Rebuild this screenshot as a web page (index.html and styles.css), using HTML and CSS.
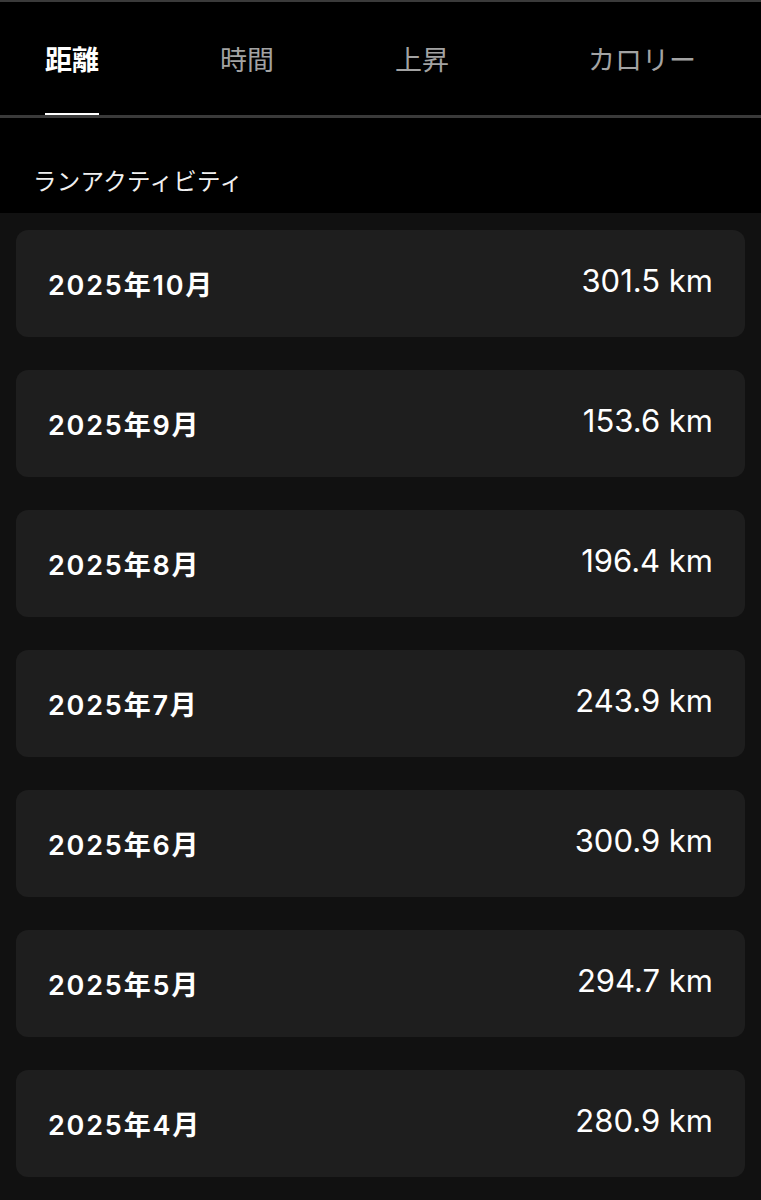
FILE: index.html
```html
<!DOCTYPE html>
<html lang="ja">
<head>
    <meta charset="UTF-8">
    <meta name="viewport" content="width=device-width, initial-scale=1.0">
    <title>ランアクティビティ</title>
    <link rel="stylesheet" href="styles.css">
</head>
<body>
    <header class="tabs">
        <nav class="tab-list">
            <a class="tab active" href="#">距離</a>
            <a class="tab" href="#">時間</a>
            <a class="tab" href="#">上昇</a>
            <a class="tab tab-last" href="#">カロリー</a>
        </nav>
    </header>

    <div class="section-title">ランアクティビティ</div>

    <main class="month-list">
        <div class="month-card">
            <span class="month">2025年10月</span>
            <span class="value">301.5 km</span>
        </div>
        <div class="month-card">
            <span class="month">2025年9月</span>
            <span class="value">153.6 km</span>
        </div>
        <div class="month-card">
            <span class="month">2025年8月</span>
            <span class="value">196.4 km</span>
        </div>
        <div class="month-card">
            <span class="month">2025年7月</span>
            <span class="value">243.9 km</span>
        </div>
        <div class="month-card">
            <span class="month">2025年6月</span>
            <span class="value">300.9 km</span>
        </div>
        <div class="month-card">
            <span class="month">2025年5月</span>
            <span class="value">294.7 km</span>
        </div>
        <div class="month-card">
            <span class="month">2025年4月</span>
            <span class="value">280.9 km</span>
        </div>
    </main>
</body>
</html>
```

FILE: styles.css
```css
body {
    font-family: Inter, "Noto Sans CJK JP", sans-serif;
    margin: 0;
    padding: 0;
    background-color: #111111;
    color: #ffffff;
}
.tabs {
    background-color: #000000;
    border-top: 2px solid #3a3a3a;
    border-bottom: 3px solid #3a3a3a;
}
.tab-list {
    display: flex;
    padding-left: 45px;
    gap: 121px;
    height: 113px;
}
.tab {
    font-family: "Noto Sans CJK JP", sans-serif;
    font-size: 27px;
    color: #a3a3a3;
    text-decoration: none;
    padding-top: 37px;
    line-height: 40px;
    box-sizing: border-box;
    height: 113px;
    border-bottom: 2px solid transparent;
}
.tab.active {
    color: #ffffff;
    font-weight: bold;
    border-bottom-color: #ffffff;
}
.tab-last {
    margin-left: 18px;
}
.section-title {
    background-color: #000000;
    font-family: "Noto Sans CJK JP", sans-serif;
    font-size: 23.5px;
    letter-spacing: 0.3px;
    color: #f0f0f0;
    padding: 47px 33px 0;
    height: 48px;
    line-height: 30px;
}
.month-list {
    padding: 17px 16px 20px;
    display: flex;
    flex-direction: column;
    gap: 33px;
}
.month-card {
    background-color: #1e1e1e;
    border-radius: 12px;
    height: 107px;
    padding: 0 32px;
    display: flex;
    justify-content: space-between;
    align-items: center;
}
.month {
    font-size: 27px;
    font-weight: 600;
    letter-spacing: 1.8px;
}
.value {
    font-size: 31px;
    margin-bottom: 6px;
}
```
